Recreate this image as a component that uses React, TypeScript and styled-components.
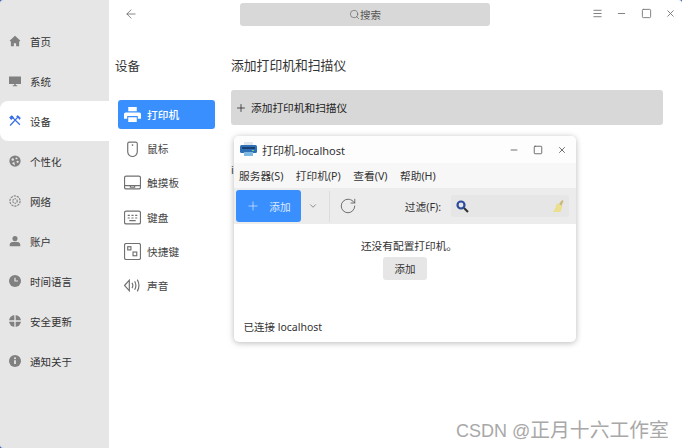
import React from "react";
import styled, { createGlobalStyle } from "styled-components";
import {
  ArrowLeft, Search, Menu, Minus, Square, X, Plus, ChevronDown, RotateCw,
} from "lucide-react";

const Global = createGlobalStyle`
  html, body { margin: 0; padding: 0; background: #fff; }
  body { font-family: "Noto Sans", "Noto Sans CJK SC", sans-serif; color: #333; }
`;
const Page = styled.div`
  position: relative; width: 682px; height: 448px; overflow: hidden; display: flex; background: #2d5fb5;
`;
const Sidebar = styled.nav`
  width: 109px; flex: none; background: #e6e6e6; padding-top: 21px; box-sizing: border-box;
  display: flex; flex-direction: column; border-radius: 3px 0 0 3px;
`;
const NavRow = styled.div<{ $active?: boolean }>`
  height: 40px; display: flex; align-items: center; gap: 9px; padding-left: 9px;
  border-radius: ${(p) => (p.$active ? "8px 0 0 8px" : "0")};
  background: ${(p) => (p.$active ? "#fff" : "transparent")};
  font-size: 10.5px; color: #333;
  svg { width: 12px; height: 12px; flex: none; }
`;
const SubColumn = styled.div`
  width: 122px; flex: none; box-sizing: border-box; padding: 56px 0 0 6px; background: #fff;
`;
const SubTitle = styled.div`
  font-size: 12.5px; line-height: 22px; color: #333; margin-bottom: 22px;
`;
const SubList = styled.div`
  display: flex; flex-direction: column; gap: 5.2px; width: 97px; margin-left: 3px;
`;
const SubItem = styled.div<{ $active?: boolean }>`
  height: 29px; display: flex; align-items: center; gap: 6px; padding-left: 6px; box-sizing: border-box;
  border-radius: 3px; font-size: 10.7px;
  background: ${(p) => (p.$active ? "#3a8fff" : "transparent")};
  color: ${(p) => (p.$active ? "#fff" : "#444")};
  font-weight: ${(p) => (p.$active ? 500 : 400)};
  svg { width: 17px; height: 17px; flex: none; }
`;
const Main = styled.main`
  flex: 1; min-width: 0; display: flex; flex-direction: column; background: #fff; border-radius: 0 3px 0 0;
`;
const TopBar = styled.div`
  height: 23px; margin-top: 3px; display: flex; align-items: center; position: relative;
`;
const BackBtn = styled.div`
  position: absolute; left: -107px; top: 4px; color: #555; display: flex;
`;
const SearchBox = styled.div`
  width: 250px; height: 23px; margin-left: 9px; border-radius: 3px; background: #d8d8d8;
  display: flex; align-items: center; justify-content: center; font-size: 10.5px; color: #555;
`;
const WinButtons = styled.div`
  margin-left: auto; margin-right: 6px; display: flex; align-items: center; gap: 13.5px; color: #777;
  margin-top: -3px;
  svg { width: 11px; height: 11px; }
`;
const Heading = styled.h2`
  margin: 28px 0 14px; font-size: 12.8px; font-weight: 400; line-height: 22px; color: #333;
`;
const AddRow = styled.div`
  width: 432px; height: 35px; background: #d8d8d8; border-radius: 3px; display: flex; align-items: center;
  gap: 4px; padding-left: 4px; box-sizing: border-box; font-size: 10.7px; color: #222;
`;
const CutOff = styled.div`
  font-size: 11px; color: #444; margin-top: 38px; line-height: 14px;
`;
const Dialog = styled.section`
  position: absolute; left: 234px; top: 136px; width: 342px; height: 206px; background: #fff;
  border-radius: 5px; box-shadow: 0 1px 6px rgba(0,0,0,.28); display: flex; flex-direction: column; overflow: hidden;
`;
const DTitle = styled.div`
  height: 27px; flex: none; display: flex; align-items: center; padding: 0 9px 0 6px; font-size: 11px; color: #333;
  gap: 5px; background: #fdfdfd;
`;
const DControls = styled.div`
  margin-left: auto; display: flex; align-items: center; gap: 14px; color: #555;
  svg { width: 10px; height: 10px; display: block; }
`;
const DMenu = styled.div`
  height: 25px; flex: none; background: #f7f7f7; display: flex; align-items: center; gap: 12.5px; padding-left: 5px;
  font-size: 10.7px; color: #333;
`;
const DTools = styled.div`
  height: 36px; flex: none; background: #ececec; display: flex; align-items: center; padding: 0 7px 0 2px;
  font-size: 10.7px; color: #333;
`;
const AddBtn = styled.div`
  width: 65px; height: 32px; background: #3a8fff; border-radius: 3px; color: #dbe9ff; font-size: 10.7px;
  display: flex; align-items: center; justify-content: center; gap: 9px;
  svg { width: 14px; height: 14px; }
`;
const Caret = styled.div`
  width: 28px; padding-right: 5px; box-sizing: border-box; display: flex; justify-content: center; color: #555; align-self: center;
  svg { width: 10px; height: 10px; display: block; }
`;
const Sep = styled.div`width: 1px; height: 31px; background: #dcdcdc;`;
const Reload = styled.div`
  margin-left: 9px; color: #555; display: flex;
`;
const FilterLabel = styled.span`margin-left: auto; margin-right: 10px;`;
const FilterBox = styled.div`
  width: 118px; height: 22px; background: #e6e6e6; border-radius: 3px; display: flex; align-items: center;
  justify-content: space-between; padding: 0 5px; box-sizing: border-box;
`;
const DBody = styled.div`
  flex: 1; display: flex; flex-direction: column; align-items: center; padding-top: 14px; position: relative; font-size: 10.7px; color: #333;
`;
const EmptyMsg = styled.div`line-height: 16px; margin-left: 8px;`;
const SmallBtn = styled.div`
  margin-top: 3px; width: 44px; height: 23px; border-radius: 3px; background: #e6e6e6; display: flex;
  align-items: center; justify-content: center; font-size: 10.5px; color: #333;
`;
const Status = styled.div`
  position: absolute; left: 9.5px; bottom: 7px; font-size: 10.5px; color: #333; line-height: 16px;
`;
const Watermark = styled.div`
  position: absolute; left: 456px; top: 418px; font-size: 18px; line-height: 24px; color: #a8a8a8;
  font-family: "Liberation Sans", "Noto Sans CJK SC", sans-serif; white-space: nowrap;
`;
const WatermarkCjk = styled.span`font-size: 19.8px;`;

const G = "#808080";
const I = (d: React.ReactNode, vb = "0 0 16 16") => <svg viewBox={vb} fill={G}>{d}</svg>;
const navItems: [string, React.ReactNode][] = [
  ["首页", I(<path d="M8 1 .8 7.500 2 8.600l.5-.4V15h4v-4h3v4h4V8.200l.5.4 1.200-1.100z" />)],
  ["系统", I(<path d="M0 2h16v10H9v1.500h2V15H5v-1.500h2V12H0z" />)],
  ["设备", <svg viewBox="0 0 16 16" fill="none" stroke="#3a6fe6" strokeWidth="1.700"><path d="M3 1.500 14.500 13M13 1.500 1.500 14" /><path d="M1 3.500 3.500 1 6 3 3 6zM10 2l2-1 3 3-1 2" strokeWidth="1.300" fill="#3a6fe6" /></svg>],
  ["个性化", I(<><circle cx="8" cy="8" r="7.500" /><circle cx="5" cy="6" r="1.600" fill="#e6e6e6" /><circle cx="10" cy="4.500" r="1.300" fill="#e6e6e6" /><circle cx="11.500" cy="9" r="1.500" fill="#e6e6e6" /><path d="M4 11l3-2 1 5z" fill="#e6e6e6" /></>)],
  ["网络", <svg viewBox="0 0 16 16" fill="none" stroke={G} strokeWidth="1.500"><circle cx="8" cy="8" r="6.800" strokeDasharray="3 1.200" /><circle cx="8" cy="8" r="3" strokeDasharray="2 1" /></svg>],
  ["账户", I(<><circle cx="8" cy="4.600" r="3.400" /><path d="M1 15v-2.500C1 10 4 9 8 9s7 1 7 3.500V15z" /></>)],
  ["时间语言", I(<><circle cx="8" cy="8" r="8" /><path d="M8 3.500V8h4" fill="none" stroke="#e6e6e6" strokeWidth="1.600" /></>)],
  ["安全更新", I(<><circle cx="8" cy="8" r="8" /><path d="M8 0v16M0 8h16" stroke="#e6e6e6" strokeWidth="1.800" /></>)],
  ["通知关于", I(<><circle cx="8" cy="8" r="8" /><path d="M8 7v5" stroke="#e6e6e6" strokeWidth="2.400" /><circle cx="8" cy="4.300" r="1.400" fill="#e6e6e6" /></>)],
];
const L = "#707070";
const subItems: [string, React.ReactNode][] = [
  ["打印机", <svg viewBox="0 0 16 16" fill="#fff"><path d="M4 1h8v4H4zM1.500 6h13A1.500 1.500 0 0 1 16 7.500V12h-3V9.500H3V12H0V7.500A1.500 1.500 0 0 1 1.500 6zM4 10.500h8V15H4z" /></svg>],
  ["鼠标", <svg viewBox="0 0 16 16" fill="none" stroke={L} strokeWidth="1.100"><path d="M3.500 3.500a1.500 1.500 0 0 1 1.500-1.500h6a1.500 1.500 0 0 1 1.500 1.500V11a4.500 4.500 0 0 1-9 0z" /><path d="M8 4v1.500" strokeWidth="1.300" /></svg>],
  ["触摸板", <svg viewBox="0 0 16 16" fill="none" stroke={L} strokeWidth="1.100"><rect x=".5" y="2" width="15" height="12" rx="1.500" /><path d="M.5 11h15M6 11v1.500h4V11" /></svg>],
  ["键盘", <svg viewBox="0 0 16 16" fill="none" stroke={L} strokeWidth="1.100"><rect x=".5" y="2" width="15" height="12" rx="1.500" /><path d="M3.500 6h2M7 6h2M10.500 6h2M3.500 8.500h2M7 8.500h2M10.500 8.500h2M5 11h6" /></svg>],
  ["快捷键", <svg viewBox="0 0 16 16" fill="none" stroke={L} strokeWidth="1.100"><rect x=".5" y=".5" width="15" height="15" rx="1.500" /><rect x="3.500" y="3.500" width="3" height="3" /><rect x="8.500" y="8.500" width="3.500" height="3.500" /></svg>],
  ["声音", <svg viewBox="0 0 16 16" fill="none" stroke={L} strokeWidth="1.100"><path d="M.5 8 5 3v10zM7.500 5.500c1 1.500 1 3.500 0 5M10 4c1.500 2.500 1.500 5.500 0 8M12.500 2.500c2 3.500 2 7.500 0 11" /></svg>],
];

export default function App() {
  return (
    <Page>
      <Global />
      <Sidebar>
        {navItems.map(([t, ic]) => (
          <NavRow key={t} $active={t === "设备"}>{ic}<span>{t}</span></NavRow>
        ))}
      </Sidebar>
      <SubColumn>
        <SubTitle>设备</SubTitle>
        <SubList>
          {subItems.map(([t, ic], i) => (
            <SubItem key={t} $active={i === 0}>{ic}<span>{t}</span></SubItem>
          ))}
        </SubList>
      </SubColumn>
      <Main>
        <TopBar>
          <BackBtn><ArrowLeft size={14} strokeWidth={1.200} /></BackBtn>
          <SearchBox><Search size={11} strokeWidth={1.300} />搜索</SearchBox>
          <WinButtons><Menu /><Minus /><Square /><X /></WinButtons>
        </TopBar>
        <Heading>添加打印机和扫描仪</Heading>
        <AddRow><Plus size={12} strokeWidth={1.500} />添加打印机和扫描仪</AddRow>
        <CutOff>i</CutOff>
      </Main>
      <Dialog>
        <DTitle>
          <svg width="17" height="15" viewBox="0 0 17 15">
            <rect x="4" y="0" width="9" height="4" fill="#dfe6ee" />
            <rect x="0" y="3" width="17" height="8" rx="1.500" fill="#2f6fb5" />
            <rect x="2" y="5" width="13" height="2" fill="#1a3f73" />
            <rect x="4" y="10" width="9" height="4" fill="#7fb8e0" />
            <rect x="12" y="8" width="2" height="1" fill="#7bd06c" />
          </svg>
          <span>打印机-localhost</span>
          <DControls><Minus /><Square /><X /></DControls>
        </DTitle>
        <DMenu><span>服务器(S)</span><span>打印机(P)</span><span>查看(V)</span><span>帮助(H)</span></DMenu>
        <DTools>
          <AddBtn><Plus strokeWidth={1.200} />添加</AddBtn>
          <Caret><ChevronDown strokeWidth={1.500} /></Caret>
          <Sep />
          <Reload><RotateCw size={18} strokeWidth={1.100} /></Reload>
          <FilterLabel>过滤(F):</FilterLabel>
          <FilterBox>
            <svg width="13" height="13" viewBox="0 0 13 13" fill="none"><circle cx="5" cy="5" r="3.500" stroke="#2c4c9c" strokeWidth="2.200" /><path d="M8 8l4 4" stroke="#333" strokeWidth="2.200" /></svg>
            <svg width="13" height="14" viewBox="0 0 13 14"><path d="M8 5l3-4 1.500 1-2 5z" fill="#c9b97a" /><path d="M6 4l5.500 3.500L9.500 13H2c1.500-2 3-5 4-9z" fill="#ebdf8f" /></svg>
          </FilterBox>
        </DTools>
        <DBody>
          <EmptyMsg>还没有配置打印机。</EmptyMsg>
          <SmallBtn>添加</SmallBtn>
          <Status>已连接 localhost</Status>
        </DBody>
      </Dialog>
      <Watermark>CSDN @<WatermarkCjk>正月十六工作室</WatermarkCjk></Watermark>
    </Page>
  );
}
